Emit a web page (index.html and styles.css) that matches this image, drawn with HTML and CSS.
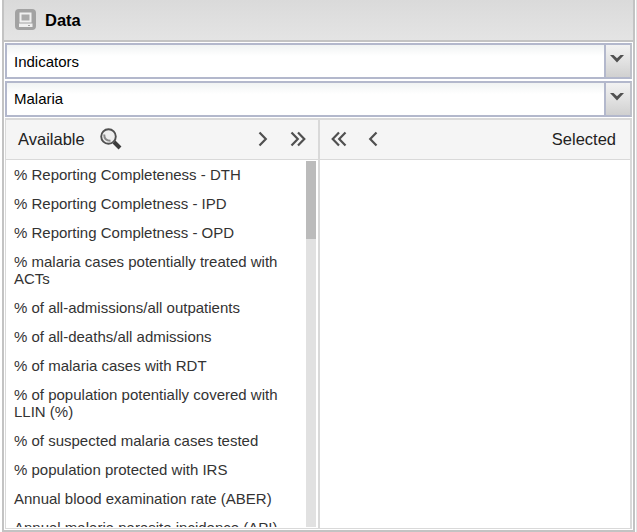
FILE: index.html
```html
<!DOCTYPE html>
<html lang="en">
<head>
<meta charset="utf-8">
<title>Data</title>
<link rel="stylesheet" href="styles.css">
</head>
<body>
<div class="panel">
  <header class="title">
    <svg width="21" height="21" viewBox="0 0 21 21"><rect width="21" height="21" rx="4" fill="#a2a2a2"/><rect x="5.500" y="4.500" width="10" height="8" fill="#aaa" stroke="#f0f0f0" stroke-width="2"/><path d="M4 14.500h13.500V18H4z" fill="#f0f0f0"/><path d="M13 16.500h2" stroke="#a2a2a2"/></svg>
    <h1>Data</h1>
  </header>
  <div class="body">
    <div class="combo"><span class="value">Indicators</span><span class="trigger"><svg width="14" height="9" viewBox="0 0 14 9"><path d="M0 1h3.500L7 4.300 10.500 1H14L7 8.500z" fill="#505050"/></svg></span></div>
    <div class="combo"><span class="value raised">Malaria</span><span class="trigger"><svg width="14" height="9" viewBox="0 0 14 9"><path d="M0 1h3.500L7 4.300 10.500 1H14L7 8.500z" fill="#505050"/></svg></span></div>
    <div class="lists">
      <section class="available">
        <div class="toolbar">
          <span>Available</span>
          <svg class="search" width="22" height="22" viewBox="0 0 22 22" fill="none"><path d="m14 14 6 6" stroke="#3c3c3c" stroke-width="4"/><circle cx="8.500" cy="8.500" r="7.300" fill="#eee" stroke="#505050" stroke-width="1.900"/><path d="M4.200 6.500c0 4 2.300 6.300 6.300 6.300" stroke="#888" stroke-width="2"/></svg>
          <svg class="next" width="10" height="16" viewBox="0 0 10 16"><path d="m1.500 1.500 6.300 6.500-6.300 6.500"/></svg>
          <svg class="last" width="17" height="16" viewBox="0 0 17 16"><path d="m1.500 1.500 6.300 6.500-6.300 6.500M8 1.500 14.300 8 8 14.500"/></svg>
        </div>
        <div class="scroller">
          <ul>
            <li>% Reporting Completeness - DTH</li>
            <li>% Reporting Completness - IPD</li>
            <li>% Reporting Completness - OPD</li>
            <li>% malaria cases potentially treated with<br>ACTs</li>
            <li>% of all-admissions/all outpatients</li>
            <li>% of all-deaths/all admissions</li>
            <li>% of malaria cases with RDT</li>
            <li>% of population potentially covered with<br>LLIN (%)</li>
            <li>% of suspected malaria cases tested</li>
            <li>% population protected with IRS</li>
            <li>Annual blood examination rate (ABER)</li>
            <li>Annual malaria parasite incidence (API)</li>
          </ul>
          <div class="track"><div class="thumb"></div></div>
        </div>
      </section>
      <section class="selected">
        <div class="toolbar">
          <svg class="first" width="17" height="16" viewBox="0 0 17 16"><path d="M9 1.500 2.700 8 9 14.500M15.500 1.500 9.200 8l6.300 6.500"/></svg>
          <svg class="prev" width="10" height="16" viewBox="0 0 10 16"><path d="M8.500 1.500 2.200 8l6.300 6.500"/></svg>
          <span class="label">Selected</span>
        </div>
      </section>
    </div>
  </div>
</div>
</body>
</html>
```
FILE: styles.css
```css
* { box-sizing: border-box; }
body {
  margin: 0;
  height: 532px;
  padding: 0 1px 0 2px;
  overflow: hidden;
  background: #fff;
  border-right: 1px solid #e2e2e2;
  font-family: "Liberation Sans", Arial, sans-serif;
}
svg { display: block; flex: none; }
.panel {
  height: 532px;
  border: 2px solid #c3c3c3;
  border-top: 0;
  display: flex;
  flex-direction: column;
}
.title {
  height: 42px;
  padding: 0 0 2px 11px;
  display: flex;
  align-items: center;
  gap: 9px;
  background: linear-gradient(#dadada, #e4e4e4);
  border-bottom: 2px solid #c3c3c3;
}
h1 { margin: 0; font-size: 16.5px; line-height: 20px; color: #000; }
.title h1 { padding-top: 1px; }
.body {
  flex: 1;
  min-height: 0;
  padding: 1px 1px 1px;
  display: flex;
  flex-direction: column;
}
.combo {
  flex: none;
  height: 36px;
  margin-bottom: 2px;
  display: flex;
  border: 2px solid #b3b8cc;
  border-right-color: #c0c2ca;
  background: linear-gradient(#f0f3f3, #fff 11px);
}
.value { flex: 1; padding-left: 7px; font-size: 15px; line-height: 33px; color: #000; }
.raised { line-height: 31px; }
.trigger {
  width: 26px;
  border-left: 2px solid #b3b8cc;
  display: flex;
  justify-content: center;
  padding: 9px 2px 0 0;
  background: linear-gradient(#f2f2f2, #e2e2e2 50%, #d0d0d0);
}
.lists {
  flex: 1;
  min-height: 0;
  margin-top: -1px;
  display: flex;
  border: 2px solid #d9d9d9;
  border-left-width: 1px;
  border-bottom-width: 1px;
}
.available {
  width: 314px;
  flex: none;
  border-right: 2px solid #d9d9d9;
  display: flex;
  flex-direction: column;
}
.selected { flex: 1; }
.toolbar {
  flex: none;
  height: 40px;
  display: flex;
  align-items: center;
  padding: 0 11px 1px 12px;
  background: #f5f5f5;
  border-bottom: 1px solid #d9d9d9;
  font-size: 16.5px;
  color: #222;
}
.next path, .last path, .first path, .prev path { fill: none; stroke: #505050; stroke-width: 2.2; }
.search { margin-left: 15px; }
.next { margin-left: auto; margin-right: 22px; }
.first { margin-right: 21px; }
.selected .toolbar { padding-left: 10px; padding-right: 14px; }
.label { margin-left: auto; }
.scroller {
  flex: 1;
  min-height: 0;
  padding: 1px 2px 1px 0;
  display: flex;
  overflow: hidden;
}
ul {
  flex: 1;
  margin: 0;
  padding: 0;
  list-style: none;
  overflow: hidden;
  color: #333;
  font-size: 15px;
  line-height: 17px;
  white-space: nowrap;
}
li { padding: 6px 0 6px 8px; }
li:first-child { padding-top: 5px; }
.track { width: 10px; flex: none; background: #e1e1e1; }
.thumb { height: 78px; background: #bbb; }
```
